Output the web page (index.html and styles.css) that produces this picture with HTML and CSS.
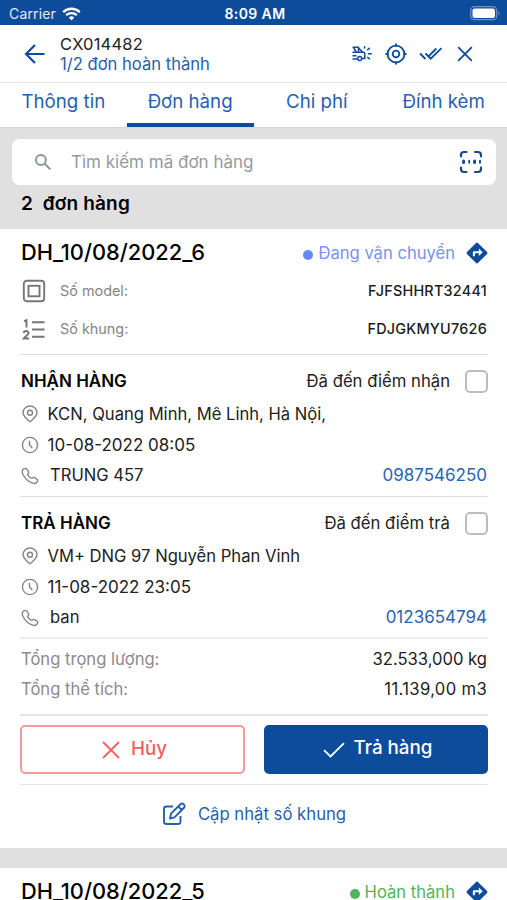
FILE: index.html
```html
<!DOCTYPE html>
<html lang="vi">
<head>
<meta charset="utf-8">
<title>CX014482</title>
<link rel="stylesheet" href="styles.css">
</head>
<body>
<svg class="defs" width="0" height="0">
  <symbol id="pin" viewBox="0 0 18 18"><path d="M9 16.800C5.400 14 2 11 2 7.600a7 6.600 0 0 1 14 0c0 3.400-3.400 6.400-7 9.200z"/><circle cx="9" cy="7.700" r="2.500"/></symbol>
  <symbol id="clock" viewBox="0 0 18 18"><circle cx="9" cy="9" r="7.600"/><path d="M8.500 4.800v4.200l2.800 3"/></symbol>
  <symbol id="phone" viewBox="0 0 18 18"><path d="M2.200 2.300C3.500 1.200 4.900 1.100 5.900 2.200l1.500 2.100c.6 1 .4 1.900-.7 2.900-.5.900 3.400 4.700 4.300 4.100.9-1 1.800-1.200 2.800-.6l2.200 1.500c1 .9.900 2-.3 3.200-1.200 1.200-3 1.400-5.300.3C6.600 13.900 3.700 11 2 7.500 1.100 5.500 1.100 3.500 2.200 2.300z"/></symbol>
  <symbol id="route" viewBox="0 0 24 24"><path fill="#0d4c9b" d="M10.700 1.300a1.800 1.800 0 0 1 2.600 0l9.400 9.400a1.800 1.800 0 0 1 0 2.600l-9.400 9.400a1.800 1.800 0 0 1-2.600 0l-9.400-9.400a1.800 1.800 0 0 1 0-2.600z"/><path fill="#fff" d="M7.500 15.500v-4.200c0-.8.500-1.300 1.300-1.300h5.200V7.200l4.200 4-4.200 4V12.300H9.700v3.200z"/></symbol>
</svg>
<header class="status">
  <div class="carrier">Carrier
    <svg width="19" height="14" viewBox="0 0 19 14" fill="none" stroke="#fff" stroke-width="2.300"><path d="M1.200 5.100a12 12 0 0 1 16.600 0M4.200 8.200a7.700 7.700 0 0 1 10.600 0"/><path d="M9.500 13.500l-2.700-3a4 4 0 0 1 5.400 0z" fill="#fff" stroke="none"/></svg>
  </div>
  <div class="time">8:09 AM</div>
  <svg class="battery" width="31" height="15" viewBox="0 0 31 15"><rect x=".7" y=".7" width="26" height="13" rx="3.800" fill="none" stroke="#6e94c4" stroke-width="1.200"/><rect x="2.500" y="2.500" width="22.500" height="9.400" rx="2" fill="#fff"/><path d="M28.300 5c1.500.7 1.500 3.700 0 4.400z" fill="#6e94c4"/></svg>
</header>
<div class="header">
  <svg class="back" width="22" height="22" viewBox="0 0 22 22"><path d="M20.500 11H2M11 2L2 11l9 9"/></svg>
  <div class="heading">
    <div class="code">CX014482</div>
    <div class="progress">1/2 đơn hoàn thành</div>
  </div>
  <div class="actions">
    <svg width="22" height="18" viewBox="0 0 22 18"><path d="M1.500 2.200h6v5M2.200 2.200l3 4.800M7.500 3l4.500 4.200M1.500 7.300h10.800c1 0 1.500.7 1.500 1.500v4.700H11M1.500 10.700h4M1.500 14h4.700"/><circle cx="8.700" cy="13.600" r="2"/><path d="M13.300 3.700l.5-2.500M16.200 5.200l2.500-2.300M16.800 8.800h4M16.200 12l2.800 2.200"/></svg>
    <svg width="22" height="22" viewBox="0 0 22 22"><circle cx="11" cy="11" r="8.400"/><circle cx="11" cy="11" r="3.300"/><path d="M11 .5v3M11 18.500v3M.5 11h3M18.500 11h3"/></svg>
    <svg width="24" height="16" viewBox="0 0 24 16"><path d="M1 7.500l5.500 5.500M6.500 7.500l5.200 5.200L22.500 2.200M10 9.800l7.300-7.300"/></svg>
    <svg width="16" height="16" viewBox="0 0 16 16"><path d="M1.200 1.200l13.600 13.600M14.800 1.200L1.200 14.800"/></svg>
  </div>
</div>
<nav class="tabs">
  <div class="tab"><span>Thông tin</span></div>
  <div class="tab active"><span>Đơn hàng</span></div>
  <div class="tab"><span>Chi phí</span></div>
  <div class="tab"><span>Đính kèm</span></div>
</nav>
<div class="band">
  <div class="search">
    <svg width="18" height="18" viewBox="0 0 18 18" fill="none" stroke="#8b959e" stroke-width="2"><circle cx="6.900" cy="6.900" r="5"/><path d="M10.700 10.700l5.700 5.700"/></svg>
    <span class="hint">Tìm kiếm mã đơn hàng</span>
    <svg class="scan" width="24" height="24" viewBox="0 0 24 24"><path d="M2 6.500V5q0-3 3-3h2.500M16 2h3q3 0 3 3v1.500M22 17.500V19q0 3-3 3h-3M7.500 22H5q-3 0-3-3v-1.500"/><path stroke-width="3" d="M4.600 11v1.600M15.600 11v1.600"/><path stroke-width="1.900" d="M10.200 10.800v2M21 10.800v2"/></svg>
  </div>
  <div class="count">2&nbsp; đơn hàng</div>
</div>
<main>
  <div class="row title">
    <span class="order">DH_10/08/2022_6</span>
    <span class="state moving">Đang vận chuyển</span>
    <svg class="route"><use href="#route"/></svg>
  </div>
  <div class="row spec model">
    <svg width="24" height="24" viewBox="0 0 24 24"><rect x="1.800" y="1.800" width="20.400" height="20.400" rx="3"/><rect x="6.500" y="6.800" width="11" height="10.500"/></svg>
    <span>Số model:</span><b>FJFSHHRT32441</b>
  </div>
  <div class="row spec frame">
    <svg width="24" height="24" viewBox="0 0 24 24"><path d="M10 4.200h12.500M10 11.500h12.500M10 18.800h12.500"/><path stroke-width="2" d="M2 3.300l2.500-1v7.200M1.800 15c.3-2.600 5-2.500 4.700.2-.2 1.700-2.800 3-4.500 5.200h5.200"/></svg>
    <span>Số khung:</span><b>FDJGKMYU7626</b>
  </div>
  <section class="stop">
    <div class="row stop-head"><h2>NHẬN HÀNG</h2><span class="arrived">Đã đến điểm nhận</span><i class="box"></i></div>
    <div class="row item"><svg><use href="#pin"/></svg><span>KCN, Quang Minh, Mê Linh, Hà Nội,</span></div>
    <div class="row item"><svg><use href="#clock"/></svg><span class="date">10-08-2022 08:05</span></div>
    <div class="row item contact"><svg><use href="#phone"/></svg><span>TRUNG 457</span><a>0987546250</a></div>
  </section>
  <section class="stop">
    <div class="row stop-head"><h2>TRẢ HÀNG</h2><span class="arrived">Đã đến điểm trả</span><i class="box"></i></div>
    <div class="row item"><svg><use href="#pin"/></svg><span>VM+ DNG 97 Nguyễn Phan Vinh</span></div>
    <div class="row item"><svg><use href="#clock"/></svg><span class="date">11-08-2022 23:05</span></div>
    <div class="row item contact"><svg><use href="#phone"/></svg><span>ban</span><a>0123654794</a></div>
  </section>
  <section class="totals">
    <div class="row"><span>Tổng trọng lượng:</span><em>32.533,000 kg</em></div>
    <div class="row"><span>Tổng thể tích:</span><em class="volume">11.139,00 m3</em></div>
  </section>
  <div class="buttons">
    <div class="btn cancel"><svg width="18" height="18" viewBox="0 0 18 18"><path d="M1 1l16 16M17 1L1 17"/></svg><span>Hủy</span></div>
    <div class="btn deliver"><svg width="22" height="16" viewBox="0 0 22 16"><path d="M1 8.200l6.500 6.300L21 1.200"/></svg><span>Trả hàng</span></div>
  </div>
  <div class="update">
    <svg width="24" height="24" viewBox="0 0 24 24"><path d="M11 4.500H4.500Q2 4.500 2 7v12.500Q2 22 4.500 22h11.500q2.500 0 2.500-2.500v-5.500"/><path d="M8 16.500l1-4.800 9.700-9.700a2.550 2.550 0 0 1 3.500 3.500L12.500 15.300zM16.300 4.500l3.500 3.500"/></svg>
    <span>Cập nhật số khung</span>
  </div>
</main>
<div class="gap"></div>
<main>
  <div class="row title next">
    <span class="order">DH_10/08/2022_5</span>
    <span class="state done">Hoàn thành</span>
    <svg class="route"><use href="#route"/></svg>
  </div>
</main>
</body>
</html>
```
FILE: styles.css
```css
* { box-sizing: border-box; }
html, body { height: 900px; overflow: hidden; }
body { margin: 0; width: 507px; background: #fff; color: #222; font-family: Inter, "Liberation Sans", sans-serif; font-size: 17px; line-height: 1; }
.defs { position: absolute; }
svg { flex: none; display: block; }
span, b, a, em, h2, .code, .progress, .count, .time { white-space: nowrap; }

.status { height: 25px; background: #0d4c9b; color: #fff; display: grid; grid-template-columns: 1fr auto 1fr; align-items: center; padding: 2px 6px 0 9px; }
.carrier { display: flex; align-items: center; gap: 6px; font-size: 14px; color: #e3ebf5; letter-spacing: .15px; }
.time { font-size: 14px; font-weight: 600; letter-spacing: .4px; }
.battery { justify-self: end; }

.header { height: 58px; border-bottom: 1px solid #e4e4e4; display: flex; align-items: center; padding: 0 34px 0 24px; }
.back, .actions svg { fill: none; stroke: #0d4c9b; stroke-width: 1.8; }
.back { stroke-width: 2.2; }
.heading { margin-left: 14px; }
.code { font-size: 16.5px; letter-spacing: .2px; line-height: 20px; }
.progress { font-size: 16.6px; line-height: 20px; color: #255fae; }
.actions { margin-left: auto; display: flex; align-items: center; gap: 12px; }
.actions svg:first-child { stroke-width: 1.5; }
.actions svg:last-child { margin-left: 2px; }

.tabs { height: 45px; display: grid; grid-template-columns: repeat(4, 1fr); border-bottom: 1px solid #d8d8d8; }
.tab { text-align: center; padding-top: 10px; font-size: 18.7px; color: #255fae; border-bottom: 4px solid transparent; }
.tab.active { border-color: #0d4c9b; }

.band { height: 101px; background: #e0e0e0; padding: 11px 11px 0 12px; }
.search { height: 46px; background: #fff; border-radius: 8px; display: flex; align-items: center; padding: 0 13px 0 22px; }
.hint { margin-left: 19px; color: #919aa2; font-size: 17px; }
.scan { margin-left: auto; fill: none; stroke: #164a8a; stroke-width: 2.2; stroke-linecap: round; }
.count { margin: 8px 0 0 9px; font-size: 19px; letter-spacing: .15px; line-height: 22px; font-weight: 600; color: #000; }

main { padding: 0 19px 0 20px; }
.row { display: flex; align-items: center; padding-left: 1px; }
.title { height: 48px; color: #000; }
.order { font-size: 21.8px; font-weight: 500; }
.state { margin-left: auto; display: flex; align-items: center; gap: 5px; font-size: 16.6px; }
.state::before { content: ""; width: 10px; height: 10px; border-radius: 50%; background: currentColor; margin-top: 3px; }
.moving { color: #7893f3; }
.moving::before { background: #638af4; }
.done { color: #4fb45a; }
.route { width: 22px; height: 22px; margin-left: 11px; }

.spec { color: #858585; font-size: 14.4px; padding: 0 1px 0 2px; }
.spec svg { fill: none; stroke: #777; stroke-width: 1.9; margin-right: 14px; }
.spec b { margin-left: auto; color: #1c1c1c; font-weight: 500; font-size: 14.4px; letter-spacing: .25px; }
.model { height: 28px; }
.frame { height: 49px; }

.stop { border-top: 1px solid #dedede; padding-top: 8px; height: 142px; }
.stop-head { height: 36px; }
h2 { margin: 0; font-size: 17px; font-weight: 600; color: #000; }
.arrived { margin-left: auto; font-size: 16.7px; }
.box { width: 23px; height: 23px; border: 2px solid #bdbdbd; border-radius: 5px; margin-left: 15px; }
.item { height: 30.7px; font-size: 16.6px; }
.item svg { width: 18px; height: 18px; fill: none; stroke: #858585; stroke-width: 1.4; margin-right: 8.5px; }
.contact svg { margin-right: 11px; }
.date { font-size: 17px; }
.item a { margin-left: auto; color: #2864b2; font-size: 17px; padding-right: 1px; }

.totals { border-top: 2px solid #ededed; height: 77px; padding-top: 5px; margin-top: -1px; }
.totals .row { height: 30.2px; color: #8b8b8b; font-size: 16.6px; padding-right: 1px; }
.totals em { font-style: normal; color: #1c1c1c; margin-left: auto; }
.totals .volume { letter-spacing: .35px; }

.buttons { height: 71px; border: solid #e6e6e6; border-width: 2px 0 1px; display: grid; grid-template-columns: 225px 224px; justify-content: space-between; padding: 9px 0 10px; }
.btn { display: flex; align-items: center; justify-content: center; border-radius: 5px; font-size: 18.8px; font-weight: 500; }
.btn svg { fill: none; stroke: currentColor; stroke-width: 1.8; }
.cancel { border: 2px solid #f59a9a; color: #f25f5f; gap: 11px; padding-left: 4px; }
.deliver { background: #0d4c9b; color: #fff; gap: 9px; padding: 0 0 3px 3px; }
.deliver svg { margin-top: 4px; }

.update { height: 63px; display: flex; align-items: center; justify-content: center; gap: 12px; padding-bottom: 5px; color: #255fae; font-size: 16.7px; }
.update svg { fill: none; stroke: #255fae; stroke-width: 1.9; stroke-linejoin: round; }
.gap { height: 20px; background: #e0e0e0; }
```
